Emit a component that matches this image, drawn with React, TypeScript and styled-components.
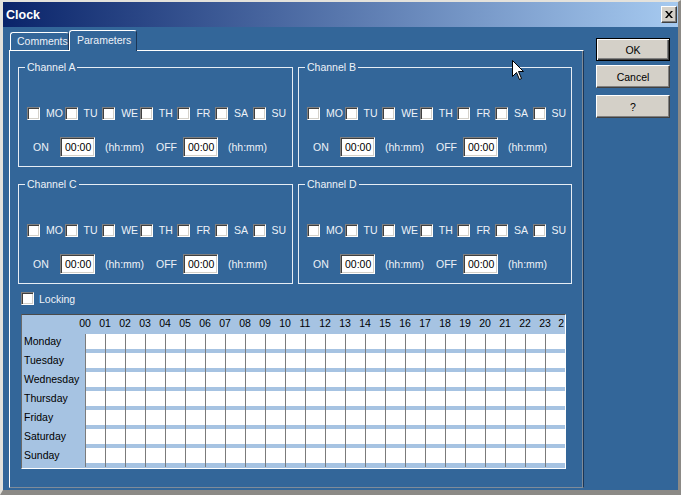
import React from 'react';
import styled, { createGlobalStyle } from 'styled-components';

const BLUE = '#336699';
const LIGHT = '#a6c3e2';
const TEXT = '#eef2f8';

const GlobalStyle = createGlobalStyle`
  html, body {
    margin: 0;
    padding: 0;
    background: #d4d0c8;
  }
  body {
    font-family: "Liberation Sans", Arial, sans-serif;
    font-size: 10.5px;
  }
`;

const Frame = styled.div`
  position: relative;
  width: 681px;
  height: 495px;
  box-sizing: border-box;
  border-style: solid;
  border-width: 2px 3px 5px 3px;
  border-color: #e4e2dc #8c8a86 #8c8a86 #e4e2dc;
  background: ${BLUE};
  display: flex;
  flex-direction: column;
  overflow: hidden;
`;

const TitleBar = styled.div`
  height: 25px;
  flex-shrink: 0;
  display: flex;
  align-items: center;
  justify-content: space-between;
  padding: 0 1px 0 3px;
  background: linear-gradient(to right, #0a246a, #a6caf0);
`;

const Title = styled.span`
  color: #fff;
  font-weight: 700;
  font-size: 12.5px;
`;

const CloseButton = styled.div`
  width: 16px;
  height: 17px;
  box-sizing: border-box;
  background: #d4d0c8;
  border: 1px solid;
  border-color: #fff #404040 #404040 #fff;
  box-shadow: inset -1px -1px 0 #808080;
  display: flex;
  align-items: center;
  justify-content: center;
`;

const Body = styled.div`
  flex: 1;
  display: flex;
  gap: 12px;
  padding: 3px 0 0 6px;
`;

const LeftColumn = styled.div`
  width: 575px;
  display: flex;
  flex-direction: column;
`;

const TabStrip = styled.div`
  height: 20px;
  display: flex;
  align-items: flex-end;
  padding-left: 1px;
`;

const Tab = styled.div<{ $w: number; $active?: boolean }>`
  position: relative;
  z-index: ${({ $active }) => ($active ? 1 : 0)};
  width: ${({ $w }) => $w}px;
  height: ${({ $active }) => ($active ? 21 : 18)}px;
  margin-bottom: ${({ $active }) => ($active ? -1 : 0)}px;
  box-sizing: border-box;
  padding-left: ${({ $active }) => ($active ? 7 : 6)}px;
  line-height: ${({ $active }) => ($active ? 19 : 16)}px;
  color: ${TEXT};
  background: ${BLUE};
  border: 1px solid;
  border-color: #fff #1b3555 transparent #fff;
  border-bottom: none;
  border-radius: 3px 3px 0 0;
`;

const Panel = styled.div`
  height: 438px;
  box-sizing: border-box;
  border: 1px solid;
  border-color: #fff #1b3555 #7f8c9a #fff;
  box-shadow: inset -1px 0 0 #7f8c9a;
  padding: 10px 0 0 8px;
  display: flex;
  flex-direction: column;
`;

const Groups = styled.div`
  display: grid;
  grid-template-columns: 275px 274px;
  column-gap: 5px;
  row-gap: 11px;
`;

const Group = styled.fieldset`
  margin: 0;
  padding: 0 0 9px 0;
  min-width: 0;
  border: 1px solid #e6edf5;
  color: ${TEXT};
`;

const Legend = styled.legend`
  margin-left: 6px;
  padding: 0 2px;
  line-height: 13px;
  height: 13px;
  color: ${TEXT};
`;

const DayRow = styled.div`
  display: grid;
  grid-template-columns: repeat(7, 37.6px);
  margin: 33px 0 0 8px;
`;

const DayItem = styled.label`
  display: flex;
  align-items: center;
  gap: 6px;
  height: 13px;
  line-height: 13px;
  color: ${TEXT};
  white-space: nowrap;
`;

const Check = styled.span`
  width: 13px;
  height: 13px;
  flex-shrink: 0;
  box-sizing: border-box;
  background: #fff;
  border: 1px solid;
  border-color: #808080 #fff #fff #808080;
  box-shadow: inset 1px 1px 0 #404040, inset -1px -1px 0 #d4d0c8;
`;

const TimeRow = styled.div`
  display: flex;
  align-items: center;
  height: 20px;
  margin: 17px 0 0 14px;
  color: ${TEXT};
`;

const TimeLabel = styled.span`
  width: 27px;
`;

const TimeBox = styled.span`
  width: 35px;
  height: 20px;
  box-sizing: border-box;
  background: #fff;
  color: #000;
  padding-left: 4px;
  line-height: 18px;
  border: 1px solid;
  border-color: #808080 #fff #fff #808080;
  box-shadow: inset 1px 1px 0 #404040, inset -1px -1px 0 #d4d0c8;
`;

const Hint = styled.span`
  width: 51px;
  margin-left: 10px;
`;

const LockRow = styled.label`
  display: flex;
  align-items: center;
  gap: 5px;
  height: 13px;
  margin: 8px 0 0 3px;
  color: ${TEXT};
`;

const Schedule = styled.div`
  width: 545px;
  height: 155px;
  box-sizing: border-box;
  margin: 9px 0 0 3px;
  border: 1px solid;
  border-color: #4a4a4a #fff #fff #6a6a6a;
  background: ${LIGHT};
  overflow: hidden;
  color: #000;
`;

const HeaderRow = styled.div`
  display: flex;
  height: 19px;
  padding-left: 53px;
`;

const HourLabel = styled.span<{ $edge?: boolean }>`
  width: ${({ $edge }) => ($edge ? 9 : 20)}px;
  flex-shrink: 0;
  text-align: ${({ $edge }) => ($edge ? 'right' : 'center')};
  padding-top: 2px;
  line-height: 13px;
  overflow: hidden;
`;

const DayLine = styled.div`
  display: flex;
  height: 19px;
`;

const DayName = styled.span`
  width: 63px;
  flex-shrink: 0;
  box-sizing: border-box;
  padding-left: 2px;
  line-height: 15px;
`;

const Slot = styled.span`
  width: 20px;
  flex-shrink: 0;
  box-sizing: border-box;
  border-left: 1px solid #7b7b7b;
  background: linear-gradient(#fff 0 15px, ${LIGHT} 15px);
`;

const ButtonColumn = styled.div`
  display: flex;
  flex-direction: column;
  margin-top: 8px;
`;

const Button = styled.button<{ $default?: boolean; $gap: number }>`
  width: 74px;
  height: 23px;
  margin: ${({ $gap }) => $gap}px 0 0 0;
  padding: 0;
  box-sizing: border-box;
  font-family: "Liberation Sans", Arial, sans-serif;
  font-size: 10.5px;
  color: #000;
  background: #d4d0c8;
  border: 1px solid;
  border-color: ${({ $default }) => ($default ? '#000' : '#fff #404040 #404040 #fff')};
  box-shadow: ${({ $default }) =>
    $default
      ? 'inset 1px 1px 0 #fff, inset -1px -1px 0 #404040, inset -2px -2px 0 #808080'
      : 'inset -1px -1px 0 #808080'};
`;

const Pointer = styled.svg`
  position: absolute;
  left: 509px;
  top: 58px;
`;

const DAYS = ['MO', 'TU', 'WE', 'TH', 'FR', 'SA', 'SU'];
const WEEK = ['Monday', 'Tuesday', 'Wednesday', 'Thursday', 'Friday', 'Saturday', 'Sunday'];
const HOURS = Array.from({ length: 24 }, (_, i) => String(i).padStart(2, '0'));

const Channel = ({ name }: { name: string }) => (
  <Group>
    <Legend>{name}</Legend>
    <DayRow>
      {DAYS.map((d) => (
        <DayItem key={d}>
          <Check />
          {d}
        </DayItem>
      ))}
    </DayRow>
    <TimeRow>
      <TimeLabel>ON</TimeLabel>
      <TimeBox>00:00</TimeBox>
      <Hint>(hh:mm)</Hint>
      <TimeLabel>OFF</TimeLabel>
      <TimeBox>00:00</TimeBox>
      <Hint>(hh:mm)</Hint>
    </TimeRow>
  </Group>
);

const App = () => (
  <>
    <GlobalStyle />
    <Frame>
      <TitleBar>
        <Title>Clock</Title>
        <CloseButton>
          <svg width="8" height="7" viewBox="0 0 8 7">
            <path d="M0 0h2l2 2.5L6 0h2L5 3.5 8 7H6L4 4.5 2 7H0l3-3.5z" fill="#000" />
          </svg>
        </CloseButton>
      </TitleBar>
      <Body>
        <LeftColumn>
          <TabStrip>
            <Tab $w={59}>Comments</Tab>
            <Tab $w={68} $active>
              Parameters
            </Tab>
          </TabStrip>
          <Panel>
            <Groups>
              {['Channel A', 'Channel B', 'Channel C', 'Channel D'].map((c) => (
                <Channel key={c} name={c} />
              ))}
            </Groups>
            <LockRow>
              <Check />
              Locking
            </LockRow>
            <Schedule>
              <HeaderRow>
                {HOURS.map((h) => (
                  <HourLabel key={h}>{h}</HourLabel>
                ))}
                <HourLabel $edge>2</HourLabel>
              </HeaderRow>
              {WEEK.map((day) => (
                <DayLine key={day}>
                  <DayName>{day}</DayName>
                  {HOURS.map((h) => (
                    <Slot key={h} />
                  ))}
                </DayLine>
              ))}
            </Schedule>
          </Panel>
        </LeftColumn>
        <ButtonColumn>
          <Button $default $gap={0}>OK</Button>
          <Button $gap={4}>Cancel</Button>
          <Button $gap={7}>?</Button>
        </ButtonColumn>
      </Body>
      <Pointer width="13" height="21" viewBox="0 0 13 21">
        <path d="M0.5 0.5V16.5L4.5 12.5L7.5 19.5L9.5 18.5L6.5 11.5H11.5Z" fill="#fff" stroke="#000" strokeLinejoin="round" />
      </Pointer>
    </Frame>
  </>
);

export default App;
